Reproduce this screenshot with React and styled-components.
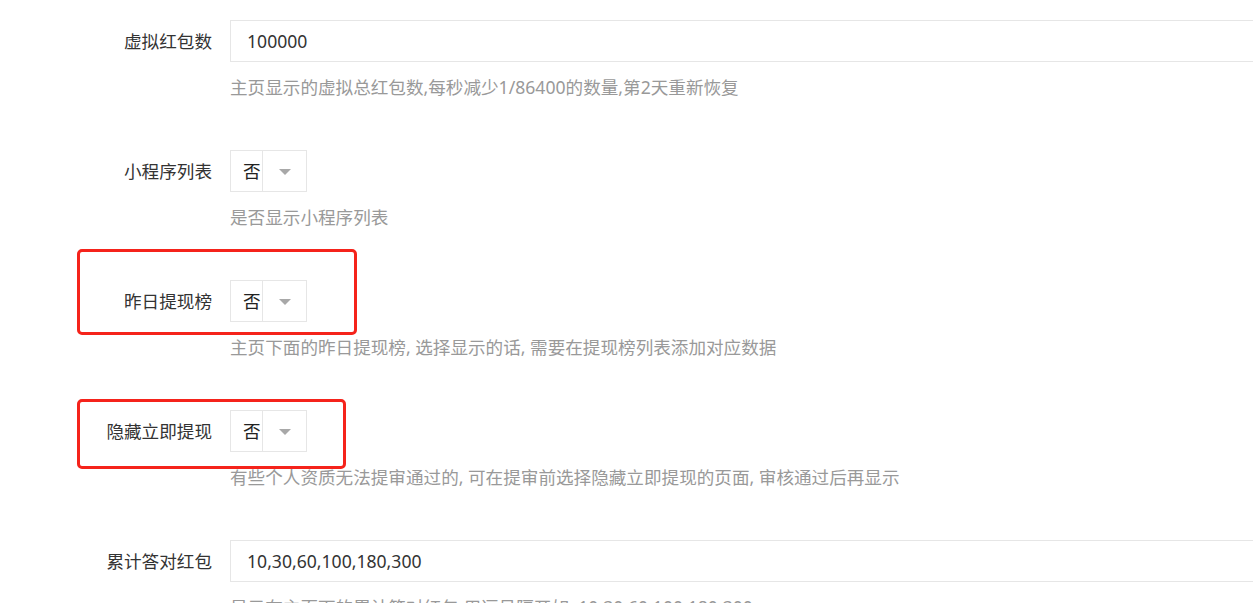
import styled, { createGlobalStyle } from "styled-components";

const GlobalStyle = createGlobalStyle`
  html, body {
    margin: 0;
    padding: 0;
    background: #fff;
    overflow: hidden;
  }
  body {
    font-family: "Noto Sans", "Noto Sans CJK SC", sans-serif;
  }
`;

const fields = [
  {
    label: "虚拟红包数",
    type: "input",
    value: "100000",
    help: "主页显示的虚拟总红包数,每秒减少1/86400的数量,第2天重新恢复",
  },
  { label: "小程序列表", type: "select", value: "否", help: "是否显示小程序列表" },
  {
    label: "昨日提现榜",
    type: "select",
    value: "否",
    help: "主页下面的昨日提现榜, 选择显示的话, 需要在提现榜列表添加对应数据",
    mark: { top: -31, width: 280, height: 86 },
  },
  {
    label: "隐藏立即提现",
    type: "select",
    value: "否",
    help: "有些个人资质无法提审通过的, 可在提审前选择隐藏立即提现的页面, 审核通过后再显示",
    mark: { top: -11, width: 269, height: 70 },
  },
  {
    label: "累计答对红包",
    type: "input",
    value: "10,30,60,100,180,300",
    help: "显示在主页下的累计答对红包,用逗号隔开如: 10,30,60,100,180,300",
  },
];

const App = () => {
  return (
    <Form>
      <GlobalStyle />
      {fields.map((f) => (
        <Row key={f.label}>
          <Label>{f.label}</Label>
          {f.type === "input" ? (
            <Input>{f.value}</Input>
          ) : (
            <Select>
              <SelectValue>{f.value}</SelectValue>
              <SelectEdge>
                <Caret />
              </SelectEdge>
            </Select>
          )}
          <Help>{f.help}</Help>
          {f.mark && <Mark $top={f.mark.top} $width={f.mark.width} $height={f.mark.height} />}
        </Row>
      ))}
    </Form>
  );
};

const Form = styled.div`
  padding-top: 20px;
  width: 1253px;
  overflow: hidden;
`;

const Row = styled.div`
  position: relative;
  display: grid;
  grid-template-columns: 212px 1fr;
  column-gap: 18px;
  margin-bottom: 52px;
`;

const Label = styled.label`
  grid-column: 1;
  height: 42px;
  line-height: 42px;
  text-align: right;
  font-size: 17.6px;
  color: #333;
  white-space: nowrap;
`;

const Input = styled.div`
  grid-column: 2;
  box-sizing: border-box;
  width: 1100px;
  height: 42px;
  line-height: 40px;
  padding-left: 16px;
  border: 1px solid #e6e6e6;
  font-size: 17.6px;
  color: #333;
`;

const Select = styled.div`
  grid-column: 2;
  display: flex;
  box-sizing: border-box;
  width: 77px;
  height: 42px;
  border: 1px solid #e6e6e6;
`;

const SelectValue = styled.span`
  width: 32px;
  box-sizing: border-box;
  padding-left: 12px;
  line-height: 40px;
  font-size: 17.6px;
  color: #222;
  border-right: 1px solid #e6e6e6;
`;

const SelectEdge = styled.span`
  flex: 1;
  display: flex;
  align-items: center;
  justify-content: center;
  padding-left: 1px;
`;

const Caret = styled.i`
  width: 0;
  height: 0;
  border-left: 6px solid transparent;
  border-right: 6px solid transparent;
  border-top: 6px solid #a8a8a8;
  margin-top: 1px;
`;

const Help = styled.div`
  grid-column: 2;
  margin-top: 14px;
  line-height: 22px;
  font-size: 17.6px;
  color: #999;
  white-space: nowrap;
`;

const Mark = styled.div`
  position: absolute;
  left: 77px;
  top: ${(p) => p.$top}px;
  width: ${(p) => p.$width}px;
  height: ${(p) => p.$height}px;
  box-sizing: border-box;
  border: 3px solid #f5231b;
  border-radius: 5px;
  pointer-events: none;
`;

export default App;
